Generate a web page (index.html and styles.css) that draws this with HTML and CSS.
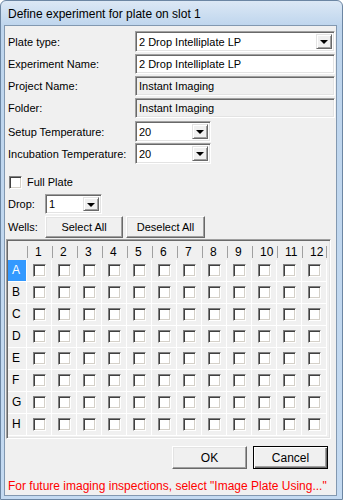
FILE: index.html
```html
<html lang="en">
<head>
  <meta charset="UTF-8" />
  <title>Define experiment for plate on slot 1</title>
  <link rel="stylesheet" href="styles.css">
</head>
<body>

  <div class="window">
    <div class="titlebar">Define experiment for plate on slot 1</div>

    <div class="client">

      <!-- plate settings -->
      <div class="row r-first">
        <span class="label">Plate type:</span>
        <div class="combo combo-wide"><span class="value">2 Drop Intelliplate LP</span><span class="drop-btn"></span></div>
      </div>
      <div class="row">
        <span class="label">Experiment Name:</span>
        <div class="textbox">2 Drop Intelliplate LP</div>
      </div>
      <div class="row">
        <span class="label">Project Name:</span>
        <div class="textbox readonly">Instant Imaging</div>
      </div>
      <div class="row">
        <span class="label">Folder:</span>
        <div class="textbox readonly">Instant Imaging</div>
      </div>
      <div class="row r-setup">
        <span class="label">Setup Temperature:</span>
        <div class="combo combo-temp"><span class="value">20</span><span class="drop-btn"></span></div>
      </div>
      <div class="row r-incub">
        <span class="label">Incubation Temperature:</span>
        <div class="combo combo-temp"><span class="value">20</span><span class="drop-btn"></span></div>
      </div>

      <div class="check-row">
        <span class="check"></span>
        <span>Full Plate</span>
      </div>

      <div class="row r-drop">
        <span class="label label-short">Drop:</span>
        <div class="combo combo-drop"><span class="value">1</span><span class="drop-btn"></span></div>
      </div>

      <div class="row r-wells">
        <span class="label label-short">Wells:</span>
        <button class="btn btn-select">Select All</button>
        <button class="btn btn-deselect">Deselect All</button>
      </div>

      <!-- wells grid -->
      <div class="plate">
        <div class="plate-head">
          <div class="hcell"></div>
          <div class="hcell"><span>1</span></div>
          <div class="hcell"><span>2</span></div>
          <div class="hcell"><span>3</span></div>
          <div class="hcell"><span>4</span></div>
          <div class="hcell"><span>5</span></div>
          <div class="hcell"><span>6</span></div>
          <div class="hcell"><span>7</span></div>
          <div class="hcell"><span>8</span></div>
          <div class="hcell"><span>9</span></div>
          <div class="hcell"><span>10</span></div>
          <div class="hcell"><span>11</span></div>
          <div class="hcell"><span>12</span><i class="sep-end"></i></div>
        </div>
        <div class="plate-body">
          <div class="rl selected">A</div><div class="c"><i></i></div><div class="c"><i></i></div><div class="c"><i></i></div><div class="c"><i></i></div><div class="c"><i></i></div><div class="c"><i></i></div><div class="c"><i></i></div><div class="c"><i></i></div><div class="c"><i></i></div><div class="c"><i></i></div><div class="c"><i></i></div><div class="c"><i></i></div>
          <div class="rl">B</div><div class="c"><i></i></div><div class="c"><i></i></div><div class="c"><i></i></div><div class="c"><i></i></div><div class="c"><i></i></div><div class="c"><i></i></div><div class="c"><i></i></div><div class="c"><i></i></div><div class="c"><i></i></div><div class="c"><i></i></div><div class="c"><i></i></div><div class="c"><i></i></div>
          <div class="rl">C</div><div class="c"><i></i></div><div class="c"><i></i></div><div class="c"><i></i></div><div class="c"><i></i></div><div class="c"><i></i></div><div class="c"><i></i></div><div class="c"><i></i></div><div class="c"><i></i></div><div class="c"><i></i></div><div class="c"><i></i></div><div class="c"><i></i></div><div class="c"><i></i></div>
          <div class="rl">D</div><div class="c"><i></i></div><div class="c"><i></i></div><div class="c"><i></i></div><div class="c"><i></i></div><div class="c"><i></i></div><div class="c"><i></i></div><div class="c"><i></i></div><div class="c"><i></i></div><div class="c"><i></i></div><div class="c"><i></i></div><div class="c"><i></i></div><div class="c"><i></i></div>
          <div class="rl">E</div><div class="c"><i></i></div><div class="c"><i></i></div><div class="c"><i></i></div><div class="c"><i></i></div><div class="c"><i></i></div><div class="c"><i></i></div><div class="c"><i></i></div><div class="c"><i></i></div><div class="c"><i></i></div><div class="c"><i></i></div><div class="c"><i></i></div><div class="c"><i></i></div>
          <div class="rl">F</div><div class="c"><i></i></div><div class="c"><i></i></div><div class="c"><i></i></div><div class="c"><i></i></div><div class="c"><i></i></div><div class="c"><i></i></div><div class="c"><i></i></div><div class="c"><i></i></div><div class="c"><i></i></div><div class="c"><i></i></div><div class="c"><i></i></div><div class="c"><i></i></div>
          <div class="rl">G</div><div class="c"><i></i></div><div class="c"><i></i></div><div class="c"><i></i></div><div class="c"><i></i></div><div class="c"><i></i></div><div class="c"><i></i></div><div class="c"><i></i></div><div class="c"><i></i></div><div class="c"><i></i></div><div class="c"><i></i></div><div class="c"><i></i></div><div class="c"><i></i></div>
          <div class="rl">H</div><div class="c"><i></i></div><div class="c"><i></i></div><div class="c"><i></i></div><div class="c"><i></i></div><div class="c"><i></i></div><div class="c"><i></i></div><div class="c"><i></i></div><div class="c"><i></i></div><div class="c"><i></i></div><div class="c"><i></i></div><div class="c"><i></i></div><div class="c"><i></i></div>
        </div>
      </div>

      <div class="actions">
        <button class="btn btn-ok">OK</button>
        <button class="btn btn-ok default">Cancel</button>
      </div>

      <div class="hint">For future imaging inspections, select "Image Plate Using..."</div>
    </div>
  </div>

</body>
</html>
```

FILE: styles.css
```css
body {
  margin: 0;
  width: 343px;
  height: 500px;
  background: #fff;
  font-family: "Liberation Sans", Arial, sans-serif;
  font-size: 11px;
  color: #000;
}

/* window frame */
.window {
  box-sizing: border-box;
  height: 500px;
  border: 1px solid #6c86a3;
  border-radius: 6px 6px 0 0;
  background: linear-gradient(#dce8f5, #bed5ed 25px, #c4daf1);
  padding: 0 5px 3px 3px;
  display: flex;
  flex-direction: column;
}

.titlebar {
  height: 24px;
  line-height: 26px;
  padding-left: 4px;
  font-size: 12px;
}

.client {
  flex: 1;
  background: #f0f0f0;
  border: 1px solid #8298b0;
  padding: 5px 1px 0 3px;
  display: flex;
  flex-direction: column;
}

/* form rows */
.row {
  display: flex;
  align-items: center;
  margin-top: 2px;
}

.r-first { margin-top: 0; }
.r-setup { margin-top: 3px; }
.r-incub { margin-top: 1px; }
.r-drop { margin-top: 5px; }

.label {
  width: 127px;
  flex: none;
}

.label-short { width: 37px; }

.textbox, .combo {
  box-sizing: border-box;
  height: 20px;
  background: #fff;
  border: 1px solid;
  border-color: #a0a0a0 #fff #fff #a0a0a0;
  box-shadow: inset 1px 1px #696969, inset -1px -1px #e3e3e3;
  padding: 0 3px;
  line-height: 18px;
  white-space: nowrap;
}

.textbox { width: 201px; }
.readonly { background: #f0f0f0; }

.combo {
  display: flex;
  align-items: center;
  justify-content: space-between;
  height: 21px;
  padding: 2px;
}

.combo .value { padding-left: 1px; }
.combo-wide { width: 201px; }
.combo-temp { width: 76px; }
.combo-drop { width: 57px; height: 20px; }

.drop-btn {
  box-sizing: border-box;
  width: 16px;
  height: 100%;
  background: #f0f0f0;
  border: 1px solid;
  border-color: #e3e3e3 #696969 #696969 #e3e3e3;
  box-shadow: inset 1px 1px #fff, inset -1px -1px #a0a0a0;
  display: flex;
  align-items: center;
  justify-content: center;
}

.drop-btn::after {
  content: "";
  border-left: 4px solid transparent;
  border-right: 4px solid transparent;
  border-top: 4px solid #000;
  margin-top: 1px;
}

/* checkbox */
.check-row {
  display: flex;
  align-items: center;
  gap: 5px;
  margin: 11px 0 0 1px;
  height: 14px;
}

.check, .c i {
  box-sizing: border-box;
  width: 13px;
  height: 13px;
  background: #fff;
  border: 1px solid;
  border-color: #808080 #fff #fff #808080;
  box-shadow: inset 1px 1px #404040, inset -1px -1px #d4d0c8;
}

/* buttons */
.btn {
  box-sizing: border-box;
  height: 22px;
  margin: 0;
  padding: 0;
  background: #f0f0f0;
  font-family: inherit;
  font-size: 11px;
  color: #000;
  border: 1px solid;
  border-color: #fff #696969 #696969 #fff;
  box-shadow: inset -1px -1px #a0a0a0, inset 1px 1px #e3e3e3;
}

.btn-select { width: 78px; }
.btn-deselect { width: 79px; margin-left: 3px; }

/* plate grid */
.plate {
  box-sizing: border-box;
  width: 325px;
  height: 200px;
  margin: 1px 0 0 -2px;
  border: 1px solid;
  border-color: #a0a0a0 #fff #fff #a0a0a0;
  box-shadow: inset 1px 1px #696969, inset -1px -1px #e3e3e3;
  padding: 1px;
}

.plate-head, .plate-body {
  display: grid;
  grid-template-columns: 19px repeat(12, 25px);
}

.plate-head { height: 19px; }

.hcell {
  display: flex;
  align-items: center;
  position: relative;
}

.hcell span {
  border-left: 1px solid #a0a0a0;
  height: 12px;
  line-height: 12px;
  padding-left: 7px;
  font-size: 12px;
  margin-top: 2px;
}

.sep-end {
  position: absolute;
  right: 0;
  top: 5px;
  height: 12px;
  border-left: 1px solid #a0a0a0;
}

.plate-body { grid-auto-rows: 22px; }

.rl, .c {
  border-right: 1px solid #fff;
  border-bottom: 1px solid #fff;
}

.rl {
  padding-left: 4px;
  line-height: 21px;
  font-size: 12px;
}

.rl.selected {
  background: #3399ff;
  color: #fff;
}

.c {
  display: flex;
  align-items: center;
  justify-content: center;
}

/* dialog buttons */
.actions {
  display: flex;
  justify-content: flex-end;
  gap: 6px;
  margin: 7px 7px 0 0;
}

.btn-ok {
  width: 75px;
  height: 23px;
  font-size: 12px;
}

.btn-ok.default {
  border: 1px solid #000;
  box-shadow: inset 1px 1px #fff, inset -1px -1px #696969, inset -2px -2px #a0a0a0;
}

.hint {
  margin-top: 10px;
  color: #ff0000;
  font-size: 12px;
  line-height: 14px;
  white-space: nowrap;
}
```
